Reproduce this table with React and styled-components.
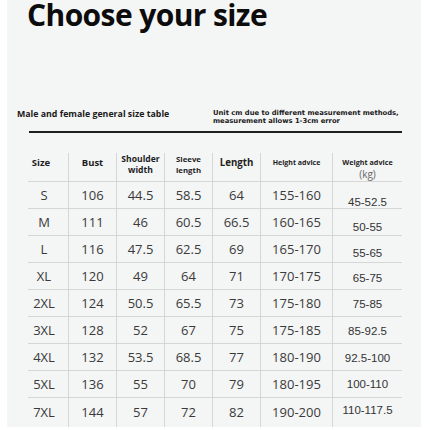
import React from "react";
import styled, { createGlobalStyle } from "styled-components";

const Global = createGlobalStyle`
  html, body { margin: 0; padding: 0; background: #ffffff; }
  body { font-family: "Open Sans", "Liberation Sans", sans-serif; }
`;

const Panel = styled.div`
  width: 414px;
  height: 427px;
  margin-left: 7px;
  background: #f4f5f5;
  overflow: hidden;
`;

const Title = styled.h1`
  margin: 0;
  padding-left: 20px;
  font-family: "Open Sans", sans-serif;
  font-weight: 700;
  font-size: 30px;
  line-height: 30px;
  color: #0c0c0c;
  letter-spacing: -0.6px;
`;

const SubRow = styled.div`
  display: grid;
  grid-template-columns: 196px 1fr;
  align-items: start;
  height: 16px;
  margin-top: 78.5px;
  padding-left: 10px;
`;

const SubLeft = styled.div`
  font-family: "Open Sans", sans-serif;
  font-weight: 700;
  font-size: 8.8px;
  line-height: 11px;
  color: #1a1a1a;
  white-space: nowrap;
`;

const SubRight = styled.div`
  margin-top: 1.5px;
  font-family: "DejaVu Sans", sans-serif;
  font-weight: 700;
  font-size: 6.8px;
  line-height: 7.5px;
  color: #1a1a1a;
  white-space: nowrap;
`;

const Rule = styled.div`
  margin: 6.5px 0 0 22px;
  width: 373px;
  height: 1.5px;
  background: #1e1e1e;
`;

const Table = styled.div`
  display: grid;
  grid-template-columns: 40px 48px 48px 48px 48px 72px 70px;
  margin: 20.5px 0 0 21px;
  width: 374px;
`;

const HeadCell = styled.div`
  box-sizing: border-box;
  height: 29px;
  display: flex;
  flex-direction: column;
  align-items: center;
  justify-content: flex-start;
  padding-top: ${(p) => p.$top}px;
  padding-right: ${(p) => p.$pr || 0}px;
  border-left: ${(p) => (p.$first ? "none" : "1px solid #d6d6d6")};
  border-bottom: 1px solid #d6d6d6;
  font-family: "Open Sans", sans-serif;
  font-weight: 700;
  font-size: ${(p) => p.$size}px;
  line-height: ${(p) => p.$lh}px;
  color: #1e1e1e;
  text-align: center;
  white-space: nowrap;
`;

const Unit = styled.span`
  font-weight: 400;
  font-size: 10px;
  line-height: 12px;
  color: #666;
`;

const Cell = styled.div`
  box-sizing: border-box;
  height: ${(p) => (p.$last ? 29 : 27)}px;
  padding-bottom: ${(p) => (p.$last ? 2 : 0)}px;
  display: flex;
  align-items: center;
  justify-content: center;
  padding-right: ${(p) => p.$pr || 0}px;
  border-left: ${(p) => (p.$first ? "none" : "1px solid #d6d6d6")};
  border-bottom: ${(p) => (p.$last ? "none" : "1px solid #d6d6d6")};
  font-family: "Open Sans", sans-serif;
  font-size: 13px;
  color: #3a3a3a;
  white-space: nowrap;
`;

const Weight = styled.span`
  font-family: "Liberation Sans", Arial, sans-serif;
  font-size: 11.5px;
  color: #333;
  transform: translateY(${(p) => p.$shift}px);
`;

const rows = [
  ["S", "106", "44.5", "58.5", "64", "155-160", "45-52.5", 7],
  ["M", "111", "46", "60.5", "66.5", "160-165", "50-55", 5],
  ["L", "116", "47.5", "62.5", "69", "165-170", "55-65", 4],
  ["XL", "120", "49", "64", "71", "170-175", "65-75", 2],
  ["2XL", "124", "50.5", "65.5", "73", "175-180", "75-85", 1],
  ["3XL", "128", "52", "67", "75", "175-185", "85-92.5", 1],
  ["4XL", "132", "53.5", "68.5", "77", "180-190", "92.5-100", 1],
  ["5XL", "136", "55", "70", "79", "180-195", "100-110", 0],
  ["7XL", "144", "57", "72", "82", "190-200", "110-117.5", -2],
];

export default function App() {
  return (
    <>
      <Global />
      <Panel>
        <Title>Choose your size</Title>
        <SubRow>
          <SubLeft>Male and female general size table</SubLeft>
          <SubRight>
            Unit cm due to different measurement methods,
            <br />
            measurement allows 1-3cm error
          </SubRight>
        </SubRow>
        <Rule />
        <Table>
          <HeadCell $first $top={3.5} $size={9.5} $lh={11} $pr={14}>Size</HeadCell>
          <HeadCell $top={3.5} $size={9.5} $lh={11}>Bust</HeadCell>
          <HeadCell $top={1} $size={8.6} $lh={10.5}>
            <span>Shoulder</span>
            <span>width</span>
          </HeadCell>
          <HeadCell $top={1} $size={7.8} $lh={10.5}>
            <span>Sleeve</span>
            <span>length</span>
          </HeadCell>
          <HeadCell $top={3.5} $size={9.7} $lh={11}>Length</HeadCell>
          <HeadCell $top={3.5} $size={7} $lh={11}>Height advice</HeadCell>
          <HeadCell $top={3.5} $size={7.2} $lh={11}>
            <span>Weight advice</span>
            <Unit>(kg)</Unit>
          </HeadCell>
          {rows.map((r, i) => {
            const last = i === rows.length - 1;
            return (
              <React.Fragment key={r[0]}>
                <Cell $first $last={last} $pr={8}>{r[0]}</Cell>
                <Cell $last={last}>{r[1]}</Cell>
                <Cell $last={last}>{r[2]}</Cell>
                <Cell $last={last}>{r[3]}</Cell>
                <Cell $last={last}>{r[4]}</Cell>
                <Cell $last={last}>{r[5]}</Cell>
                <Cell $last={last}>
                  <Weight $shift={r[7]}>{r[6]}</Weight>
                </Cell>
              </React.Fragment>
            );
          })}
        </Table>
      </Panel>
    </>
  );
}
